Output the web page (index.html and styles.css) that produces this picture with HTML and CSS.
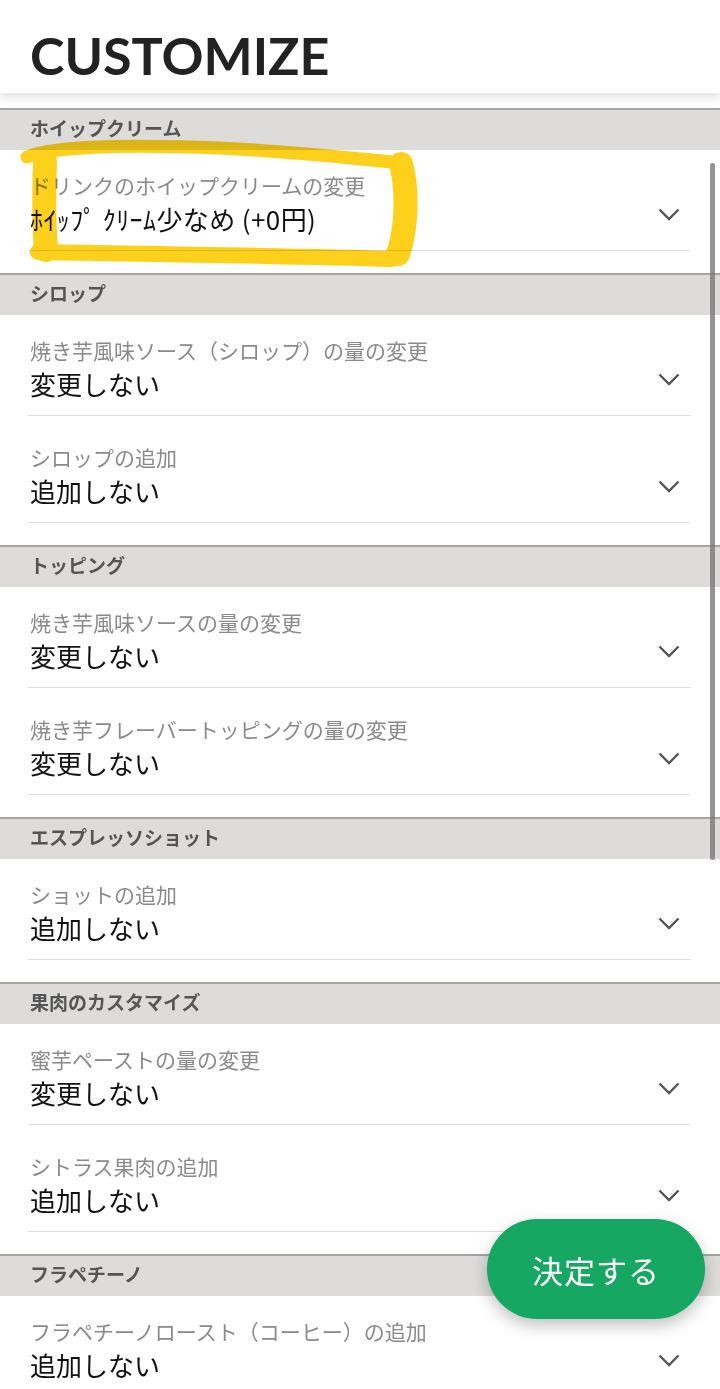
FILE: index.html
```html
<!DOCTYPE html>
<html lang="ja">

<head>
  <meta charset="UTF-8" />
  <meta name="viewport" content="width=device-width, initial-scale=1.0" />
  <title>CUSTOMIZE</title>
  <link rel="stylesheet" href="styles.css">
</head>

<body>
  <div class="header">
    <h1>CUSTOMIZE</h1>
  </div>

  <div class="list">
    <div class="section">
      <div class="section-title">ホイップクリーム</div>
      <div class="section-body">
        <div class="option">
          <div class="option-text">
            <div class="option-label">ドリンクのホイップクリームの変更</div>
            <div class="option-value narrow">ﾎｲｯﾌﾟ ｸﾘｰﾑ少なめ (+0円)</div>
          </div>
          <svg class="chevron" width="22" height="13" viewBox="0 0 22 13"><polyline points="1.5,1.5 11,11 20.5,1.5" /></svg>
        </div>
      </div>
    </div>

    <div class="section">
      <div class="section-title">シロップ</div>
      <div class="section-body">
        <div class="option">
          <div class="option-text">
            <div class="option-label">焼き芋風味ソース（シロップ）の量の変更</div>
            <div class="option-value">変更しない</div>
          </div>
          <svg class="chevron" width="22" height="13" viewBox="0 0 22 13"><polyline points="1.5,1.5 11,11 20.5,1.5" /></svg>
        </div>
        <div class="option">
          <div class="option-text">
            <div class="option-label">シロップの追加</div>
            <div class="option-value">追加しない</div>
          </div>
          <svg class="chevron" width="22" height="13" viewBox="0 0 22 13"><polyline points="1.5,1.5 11,11 20.5,1.5" /></svg>
        </div>
      </div>
    </div>

    <div class="section">
      <div class="section-title">トッピング</div>
      <div class="section-body">
        <div class="option">
          <div class="option-text">
            <div class="option-label">焼き芋風味ソースの量の変更</div>
            <div class="option-value">変更しない</div>
          </div>
          <svg class="chevron" width="22" height="13" viewBox="0 0 22 13"><polyline points="1.5,1.5 11,11 20.5,1.5" /></svg>
        </div>
        <div class="option">
          <div class="option-text">
            <div class="option-label">焼き芋フレーバートッピングの量の変更</div>
            <div class="option-value">変更しない</div>
          </div>
          <svg class="chevron" width="22" height="13" viewBox="0 0 22 13"><polyline points="1.5,1.5 11,11 20.5,1.5" /></svg>
        </div>
      </div>
    </div>

    <div class="section">
      <div class="section-title">エスプレッソショット</div>
      <div class="section-body">
        <div class="option">
          <div class="option-text">
            <div class="option-label">ショットの追加</div>
            <div class="option-value">追加しない</div>
          </div>
          <svg class="chevron" width="22" height="13" viewBox="0 0 22 13"><polyline points="1.5,1.5 11,11 20.5,1.5" /></svg>
        </div>
      </div>
    </div>

    <div class="section">
      <div class="section-title">果肉のカスタマイズ</div>
      <div class="section-body">
        <div class="option">
          <div class="option-text">
            <div class="option-label">蜜芋ペーストの量の変更</div>
            <div class="option-value">変更しない</div>
          </div>
          <svg class="chevron" width="22" height="13" viewBox="0 0 22 13"><polyline points="1.5,1.5 11,11 20.5,1.5" /></svg>
        </div>
        <div class="option">
          <div class="option-text">
            <div class="option-label">シトラス果肉の追加</div>
            <div class="option-value">追加しない</div>
          </div>
          <svg class="chevron" width="22" height="13" viewBox="0 0 22 13"><polyline points="1.5,1.5 11,11 20.5,1.5" /></svg>
        </div>
      </div>
    </div>

    <div class="section">
      <div class="section-title">フラペチーノ</div>
      <div class="section-body">
        <div class="option">
          <div class="option-text">
            <div class="option-label">フラペチーノロースト（コーヒー）の追加</div>
            <div class="option-value">追加しない</div>
          </div>
          <svg class="chevron" width="22" height="13" viewBox="0 0 22 13"><polyline points="1.5,1.5 11,11 20.5,1.5" /></svg>
        </div>
      </div>
    </div>
  </div>

  <!-- 手書きのマーカー -->
  <svg class="marker" width="720" height="300" viewBox="0 0 720 300">
    <path class="stroke-top" d="M27,157 C50,147 120,144 220,148 C300,152 350,158 402,163" />
    <path class="stroke-right" d="M401,164 C408,190 407,228 398,254" />
    <path class="stroke-bottom" d="M38,252 C150,254 300,256 392,259" />
    <path class="stroke-left" d="M45,161 C44,190 44,225 46,250" />
  </svg>

  <div class="scroll-thumb"></div>

  <button class="submit-button">決定する</button>
</body>

</html>
```

FILE: styles.css
```css
body {
  font-family: 'Noto Sans CJK JP', 'Noto Sans', sans-serif;
  margin: 0;
  padding: 0;
  background: white;
  overflow: hidden;
}

.header {
  position: relative;
  z-index: 10;
  height: 93px;
  box-sizing: border-box;
  padding: 23px 30px 0;
  background: white;
  box-shadow: 0 3px 10px rgba(0,0,0,0.14);
}

.header h1 {
  margin: 0;
  font-family: 'Lato', sans-serif;
  font-weight: 700;
  font-size: 52px;
  line-height: 64px;
  color: #222;
}

.list {
  padding-top: 15px;
}

.section-title {
  height: 40px;
  line-height: 36px;
  padding: 0 30px;
  background: #dddcdb;
  border-top: 2px solid #a5a5a5;
  color: #555;
  font-size: 19px;
  font-weight: 700;
}

.section-body {
  padding: 0 30px 22px 28px;
}

.option {
  display: flex;
  align-items: center;
  justify-content: space-between;
  padding: 20px 0 12px 2px;
  border-bottom: 1px solid #dcdcdc;
}

.option + .option {
  margin-top: 6px;
}

.option-label {
  font-size: 21px;
  line-height: 30px;
  color: #8a8a8a;
}

.option-value {
  font-size: 26px;
  line-height: 38px;
  color: #111;
}

.option-value.narrow {
  letter-spacing: 0.4px;
}

.chevron {
  margin: 20px 10px 0 0;
  fill: none;
  stroke: #555;
  stroke-width: 2.4;
}

/* マーカー */
.marker {
  position: absolute;
  left: 0;
  top: 0;
  pointer-events: none;
  mix-blend-mode: multiply;
}

.marker path {
  fill: none;
  stroke: #fdd11b;
  stroke-linecap: round;
  stroke-linejoin: round;
}

.stroke-top {
  stroke-width: 13;
}

.stroke-right {
  stroke-width: 24;
}

.stroke-bottom {
  stroke-width: 16;
}

.stroke-left {
  stroke-width: 24;
}

.scroll-thumb {
  position: fixed;
  left: 710px;
  top: 163px;
  width: 5px;
  height: 697px;
  border-radius: 3px;
  background: rgba(120,120,120,0.8);
}

.submit-button {
  position: fixed;
  right: 15px;
  bottom: 70px;
  width: 218px;
  height: 100px;
  border: none;
  border-radius: 50px;
  background: #16a862;
  color: white;
  font-family: 'Noto Sans CJK JP', sans-serif;
  font-size: 31px;
  letter-spacing: 1px;
  box-shadow: 0 6px 16px rgba(0,0,0,0.25);
}
```
